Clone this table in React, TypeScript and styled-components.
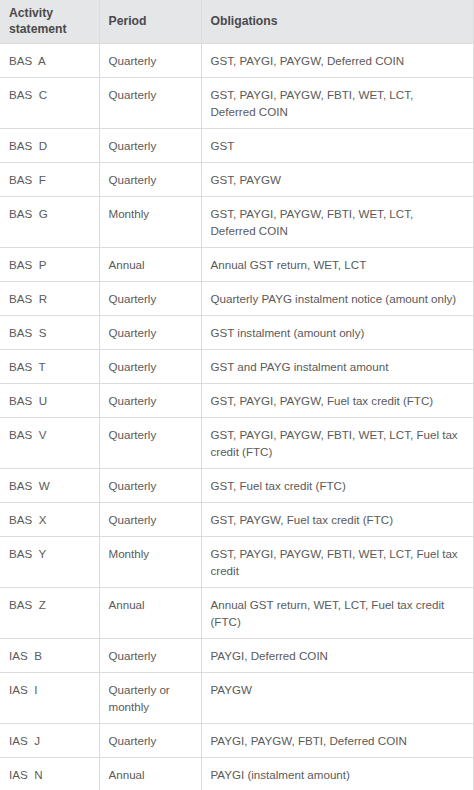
import React from "react";
import styled, { createGlobalStyle } from "styled-components";

const Global = createGlobalStyle`
  html, body { margin: 0; padding: 0; background: #ffffff; }
  body { font-family: "Liberation Sans", Arial, sans-serif; }
`;

const Table = styled.table`
  width: 473px;
  border-collapse: collapse;
  table-layout: fixed;
  font-family: "Liberation Sans", Arial, sans-serif;
  font-size: 11.6px;
  color: #5a5a5a;
`;

const Col = styled.col<{ $w: number }>`
  width: ${(p) => p.$w}px;
`;

const Head = styled.th`
  background: #e4e6e8;
  color: #4a4a4a;
  font-weight: bold;
  font-size: 12.2px;
  text-align: left;
  vertical-align: middle;
  line-height: 16px;
  padding: 5px 8px 6px 9px;
  border: 1px solid #dcdcdc;
  border-top: none;
  border-left: none;
`;

const Cell = styled.td`
  vertical-align: top;
  line-height: 17px;
  padding: 8px 13px 8px 9px;
  border: 1px solid #dcdcdc;
  border-left: none;
`;

type Row = [string, string, string];

const rows: Row[] = [
  ["BAS\u00a0 A", "Quarterly", "GST, PAYGI, PAYGW, Deferred COIN"],
  ["BAS\u00a0 C", "Quarterly", "GST, PAYGI, PAYGW, FBTI, WET, LCT, Deferred COIN"],
  ["BAS\u00a0 D", "Quarterly", "GST"],
  ["BAS\u00a0 F", "Quarterly", "GST, PAYGW"],
  ["BAS\u00a0 G", "Monthly", "GST, PAYGI, PAYGW, FBTI, WET, LCT, Deferred COIN"],
  ["BAS\u00a0 P", "Annual", "Annual GST return, WET, LCT"],
  ["BAS\u00a0 R", "Quarterly", "Quarterly PAYG instalment notice (amount only)"],
  ["BAS\u00a0 S", "Quarterly", "GST instalment (amount only)"],
  ["BAS\u00a0 T", "Quarterly", "GST and PAYG instalment amount"],
  ["BAS\u00a0 U", "Quarterly", "GST, PAYGI, PAYGW, Fuel tax credit (FTC)"],
  ["BAS\u00a0 V", "Quarterly", "GST, PAYGI, PAYGW, FBTI, WET, LCT, Fuel tax credit (FTC)"],
  ["BAS\u00a0 W", "Quarterly", "GST, Fuel tax credit (FTC)"],
  ["BAS\u00a0 X", "Quarterly", "GST, PAYGW, Fuel tax credit (FTC)"],
  ["BAS\u00a0 Y", "Monthly", "GST, PAYGI, PAYGW, FBTI, WET, LCT, Fuel tax credit"],
  ["BAS\u00a0 Z", "Annual", "Annual GST return, WET, LCT, Fuel tax credit (FTC)"],
  ["IAS\u00a0 B", "Quarterly", "PAYGI, Deferred COIN"],
  ["IAS\u00a0 I", "Quarterly or monthly", "PAYGW"],
  ["IAS\u00a0 J", "Quarterly", "PAYGI, PAYGW, FBTI, Deferred COIN"],
  ["IAS\u00a0 N", "Annual", "PAYGI (instalment amount)"],
];

export default function App() {
  return (
    <>
      <Global />
      <Table>
        <colgroup>
          <Col $w={99} />
          <Col $w={102} />
          <Col $w={272} />
        </colgroup>
        <thead>
          <tr>
            <Head>Activity statement</Head>
            <Head>Period</Head>
            <Head>Obligations</Head>
          </tr>
        </thead>
        <tbody>
          {rows.map((r) => (
            <tr key={r[0]}>
              <Cell>{r[0]}</Cell>
              <Cell>{r[1]}</Cell>
              <Cell>{r[2]}</Cell>
            </tr>
          ))}
        </tbody>
      </Table>
    </>
  );
}
